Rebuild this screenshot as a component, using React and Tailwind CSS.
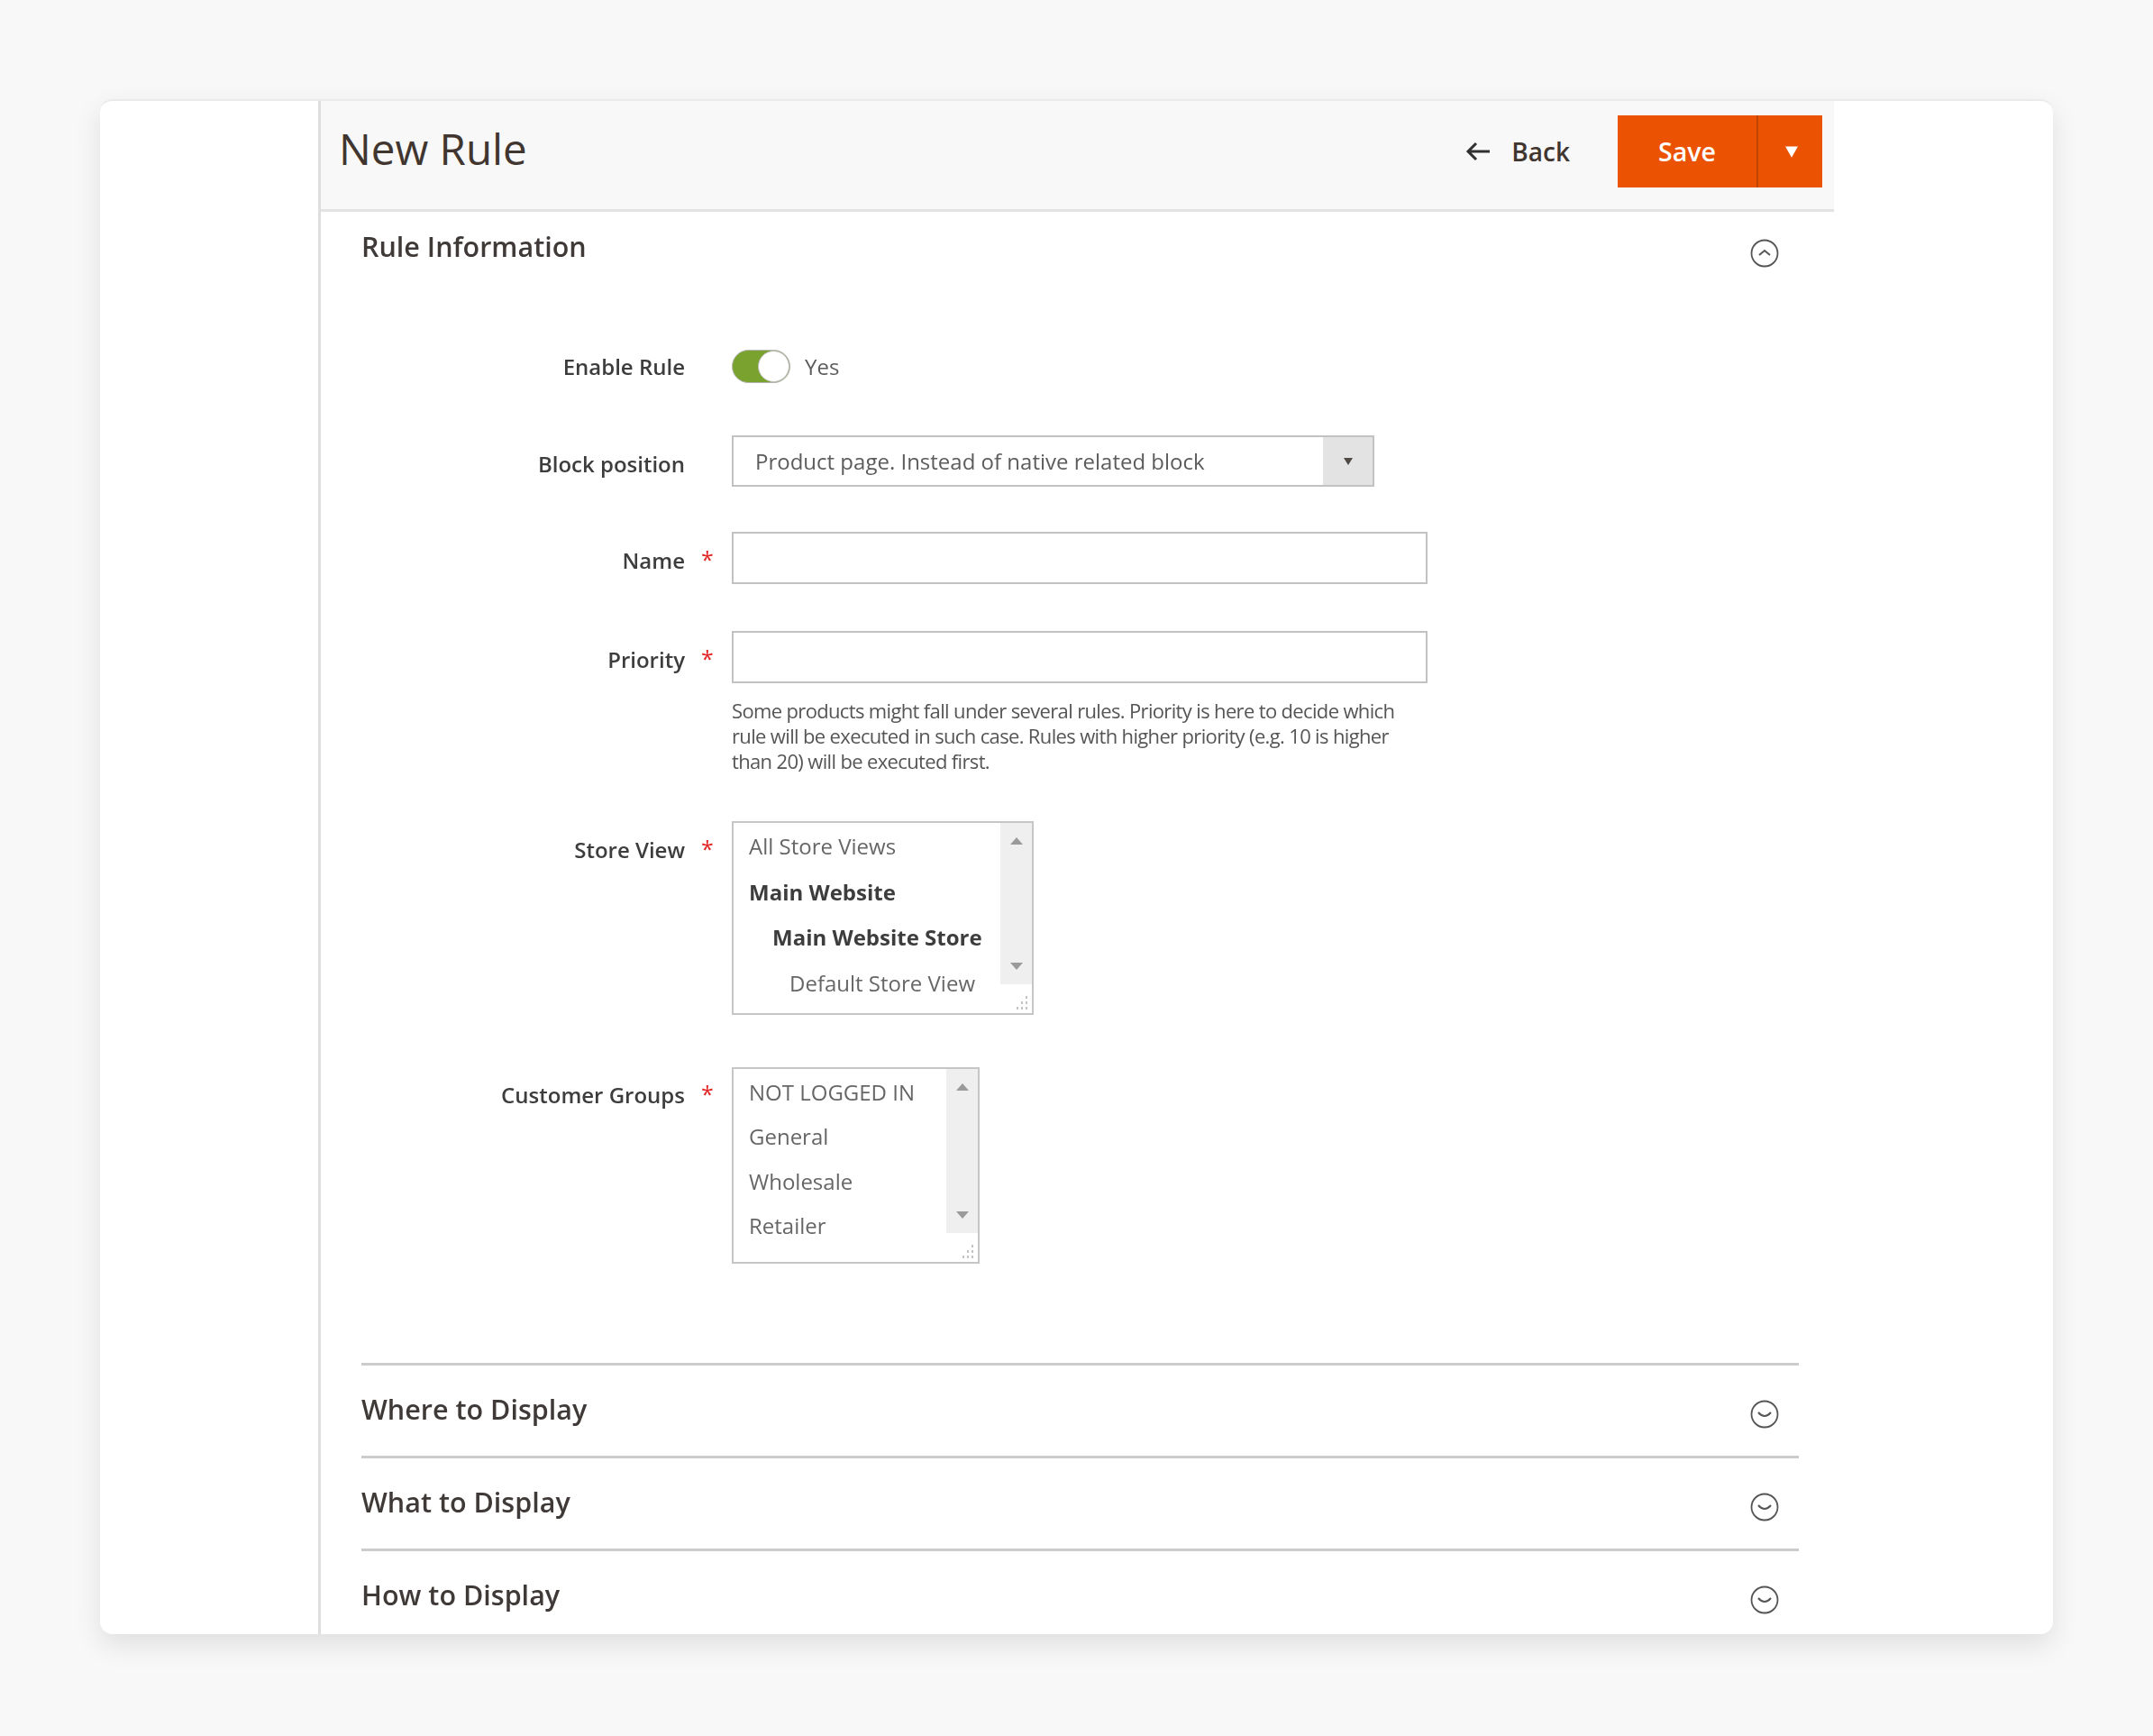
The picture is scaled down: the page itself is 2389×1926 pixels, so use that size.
import React from 'react';

const font = { fontFamily: '"Open Sans", sans-serif' };

const Chevron = ({ up }) => (
  <svg width="32" height="32" viewBox="0 0 32 32" fill="none" stroke="#555" className="shrink-0">
    <circle cx="16" cy="16" r="14.5" strokeWidth="1.8" />
    <path d={up ? 'M10 18 L16 13 L22 18' : 'M9 14 Q16 22 23 14'} strokeWidth="2" />
  </svg>
);

const Grip = () => (
  <svg width="14" height="16" viewBox="0 0 14 16" fill="#c4c4c4">
    <rect x="10" y="0" width="2" height="3" />
    <rect x="5" y="6" width="2" height="3" />
    <rect x="10" y="6" width="2" height="3" />
    <rect x="0" y="12" width="2" height="3" />
    <rect x="5" y="12" width="2" height="3" />
    <rect x="10" y="12" width="2" height="3" />
  </svg>
);

const Tri = ({ up }) => (
  <svg width="14" height="8" viewBox="0 0 14 8" fill="#9a9a9a">
    <path d={up ? 'M7 0 L14 8 L0 8 Z' : 'M0 0 L14 0 L7 8 Z'} />
  </svg>
);

const Label = ({ text, required }) => (
  <div className="w-[411px] shrink-0 flex justify-end items-center h-[36px]">
    <span className="text-[24px] font-semibold text-[#3d3d3d] mt-[6px]">{text}</span>
    <span className={required ? 'w-[52px] pl-[18px] mt-[2px] text-[25px] leading-[25px] text-[#e22626]' : 'w-[52px]'}>
      {required ? '*' : ''}
    </span>
  </div>
);

const Section = ({ title, last }) => (
  <div className={`border-t-[3px] border-[#cccccc] flex justify-between ${last ? 'h-[95px]' : 'h-[103px]'}`}>
    <h2 className="text-[30.5px] leading-[40px] font-semibold text-[#3f3a38] mt-[28px]">{title}</h2>
    <div className="mt-[38px] mr-[22px]"><Chevron /></div>
  </div>
);

const ListBox = ({ items, width, height, rowH, pad }) => (
  <div className={`border-2 border-[#c6c6c6] flex ${width} ${height}`}>
    <div className={`flex-1 ${pad}`}>
      {items.map((it) => (
        <div
          key={it.text}
          className={`flex items-center text-[24px] whitespace-nowrap ${rowH} ${it.indent} ${it.bold ? 'font-bold text-[#3d3d3d]' : 'text-[#666666]'}`}
        >
          {it.text}
        </div>
      ))}
    </div>
    <div className="w-[35px] flex flex-col">
      <div className="flex-1 bg-[#efefef] flex flex-col items-center justify-between py-[16px]">
        <Tri up />
        <Tri />
      </div>
      <div className="h-[32px] flex justify-end items-end pr-[3px] pb-[3px]"><Grip /></div>
    </div>
  </div>
);

const storeViews = [
  { text: 'All Store Views', indent: 'pl-[17px]' },
  { text: 'Main Website', bold: true, indent: 'pl-[17px]' },
  { text: 'Main Website Store', bold: true, indent: 'pl-[43px]' },
  { text: 'Default Store View', indent: 'pl-[62px]' },
];

const groups = [
  { text: 'NOT LOGGED IN', indent: 'pl-[17px]' },
  { text: 'General', indent: 'pl-[17px]' },
  { text: 'Wholesale', indent: 'pl-[17px]' },
  { text: 'Retailer', indent: 'pl-[17px]' },
];

export default function App() {
  return (
    <div style={font} className="w-[2389px] h-[1926px] bg-[#f8f8f8] pt-[110px] pl-[111px] overflow-hidden">
      <div className="w-[2167px] h-[1703px] bg-white rounded-[14px] flex overflow-hidden shadow-[0_12px_30px_rgba(0,0,0,0.10)] border-t-2 border-[#eaeaea]">
        <div className="w-[245px] shrink-0 border-r-[3px] border-[#dedede]" />

        <div className="w-[1679px] shrink-0 flex flex-col blur-[0.4px]">
          {/* page header */}
          <div className="h-[124px] bg-[#f8f8f8] border-b-[3px] border-[#e3e3e3] flex items-center pl-[20px] pr-[13px] pb-[8px]">
            <h1 className="text-[47.5px] font-normal text-[#41362f] flex-1 mb-[6px]">New Rule</h1>
            <button className="flex items-center gap-[23px] text-[28px] font-semibold text-[#41362f] mr-[53px]">
              <svg width="28" height="24" viewBox="0 0 28 24" fill="none" stroke="#303030" strokeWidth="3">
                <path d="M27 12 H3 M12 3 L3 12 L12 21" />
              </svg>
              Back
            </button>
            <div className="w-[227px] h-[80px] bg-[#eb5202] flex text-white">
              <div className="w-[156px] flex items-center justify-center text-[28.5px] font-semibold border-r-2 border-[#c04402]">Save</div>
              <div className="flex-1 flex items-center justify-center pl-[2px]">
                <svg width="14" height="13" viewBox="0 0 16 14" fill="#ffffff"><path d="M0 0 H16 L8 14 Z" /></svg>
              </div>
            </div>
          </div>

          <div className="pl-[45px] pr-[39px] flex-1 flex flex-col">
            <div className="flex justify-between h-[60px]">
              <h2 className="text-[30.5px] leading-[40px] font-semibold text-[#3f3a38] mt-[18px]">Rule Information</h2>
              <div className="mt-[30px] mr-[22px]"><Chevron up /></div>
            </div>

            <div className="h-[1217px] pt-[93px] flex flex-col">
              {/* Enable Rule */}
              <div className="flex items-center h-[37px]">
                <div className="-mt-[6px]"><Label text="Enable Rule" /></div>
                <div className="relative w-[65px] h-[37px] rounded-full bg-[#79a22e] border border-[#b5b5b5]">
                  <div className="absolute right-0 top-0 bottom-0 w-[35px] rounded-full bg-white border border-[#bdbdbd]" />
                </div>
                <span className="ml-[16px] text-[24px] text-[#5c5c5c]">Yes</span>
              </div>

              {/* Block position */}
              <div className="flex items-center mt-[58px] h-[57px]">
                <Label text="Block position" />
                <div className="w-[713px] h-[57px] border-2 border-[#c2c2c2] flex">
                  <div className="flex-1 flex items-center pl-[24px] text-[24px] text-[#5c5c5c]">Product page. Instead of native related block</div>
                  <div className="w-[55px] bg-[#e3e3e3] flex items-center justify-center">
                    <svg width="10" height="8" viewBox="0 0 10 8" fill="#514943"><path d="M0 0 H10 L5 8 Z" /></svg>
                  </div>
                </div>
              </div>

              {/* Name */}
              <div className="flex items-center mt-[50px] h-[58px]">
                <Label text="Name" required />
                <div className="w-[772px] h-[58px] border-2 border-[#c2c2c2] bg-white" />
              </div>

              {/* Priority */}
              <div className="flex items-center mt-[52px] h-[58px]">
                <Label text="Priority" required />
                <div className="w-[772px] h-[58px] border-2 border-[#c2c2c2] bg-white" />
              </div>
              <p className="ml-[411px] mt-[16px] w-[780px] text-[22px] leading-[28px] tracking-[-0.65px] text-[#555555] whitespace-nowrap">
                Some products might fall under several rules. Priority is here to decide which<br />
                rule will be executed in such case. Rules with higher priority (e.g. 10 is higher<br />
                than 20) will be executed first.
              </p>

              {/* Store View */}
              <div className="flex items-start mt-[53px]">
                <div className="mt-[11px]"><Label text="Store View" required /></div>
                <ListBox items={storeViews} width="w-[335px]" height="h-[215px]" rowH="h-[50.5px]" pad="pt-[1px]" />
              </div>

              {/* Customer Groups */}
              <div className="flex items-start mt-[58px]">
                <div className="mt-[10px]"><Label text="Customer Groups" required /></div>
                <ListBox items={groups} width="w-[275px]" height="h-[218px]" rowH="h-[49.5px]" pad="pt-[1px]" />
              </div>
            </div>

            <Section title="Where to Display" />
            <Section title="What to Display" />
            <Section title="How to Display" last />
          </div>
        </div>
      </div>
    </div>
  );
}
